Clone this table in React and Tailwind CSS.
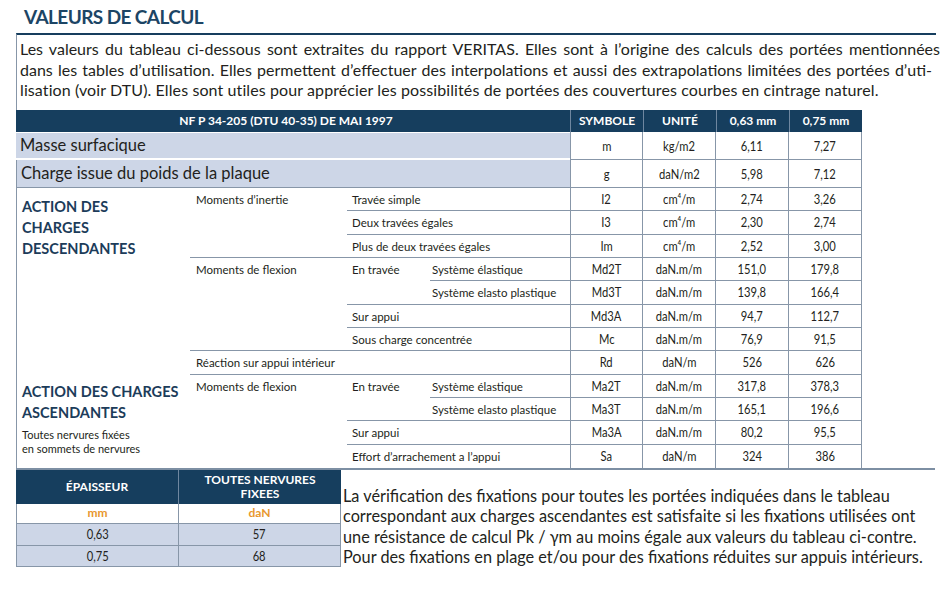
import React from "react";

const ROWS = [
  "row-start-2", "row-start-3", "row-start-4", "row-start-5", "row-start-6", "row-start-7", "row-start-8",
  "row-start-9", "row-start-10", "row-start-11", "row-start-12", "row-start-13", "row-start-14", "row-start-15",
];
const COLS = ["col-start-5", "col-start-6", "col-start-7", "col-start-8"];

const DATA = [
  ["m", "kg/m2", "6,11", "7,27"],
  ["g", "daN/m2", "5,98", "7,12"],
  ["I2", "cm⁴/m", "2,74", "3,26"],
  ["I3", "cm⁴/m", "2,30", "2,74"],
  ["Im", "cm⁴/m", "2,52", "3,00"],
  ["Md2T", "daN.m/m", "151,0", "179,8"],
  ["Md3T", "daN.m/m", "139,8", "166,4"],
  ["Md3A", "daN.m/m", "94,7", "112,7"],
  ["Mc", "daN.m/m", "76,9", "91,5"],
  ["Rd", "daN/m", "526", "626"],
  ["Ma2T", "daN.m/m", "317,8", "378,3"],
  ["Ma3T", "daN.m/m", "165,1", "196,6"],
  ["Ma3A", "daN.m/m", "80,2", "95,5"],
  ["Sa", "daN/m", "324", "386"],
];

function Val({ children }) {
  return <span className="inline-block scale-x-[0.8] text-[14px] leading-none text-[#231f20]">{children}</span>;
}

const B = "border-[#8796a8]";
const sub = "text-[11.5px] leading-[23px] text-[#231f20] whitespace-nowrap";

export default function App() {
  return (
    <div className="w-[948px] h-[594px] bg-white font-['Lato',sans-serif] text-[#231f20] overflow-hidden">
      {/* Title */}
      <div className="pl-6 pt-[4px] h-[33px] text-[19px] font-bold leading-[26px] text-[#1c4565] tracking-[-0.6px]">
        VALEURS DE CALCUL
      </div>

      {/* Intro */}
      <div className="ml-4 w-[920px] h-[77px] border-t-2 border-t-[#163e5e] border-l border-l-[#8796a8] pl-[3px] pt-[4px]">
        <div className="text-[16px] leading-[20.5px] text-[#231f20]">
          <div className="whitespace-nowrap text-justify [text-align-last:justify] w-[920px]">
            Les valeurs du tableau ci-dessous sont extraites du rapport VERITAS. Elles sont à l’origine des calculs des portées mentionnées
          </div>
          <div className="whitespace-nowrap text-justify [text-align-last:justify] w-[912px]">
            dans les tables d’utilisation. Elles permettent d’effectuer des interpolations et aussi des extrapolations limitées des portées d’uti-
          </div>
          <div className="whitespace-nowrap tracking-[0.1px]">
            lisation (voir DTU). Elles sont utiles pour apprécier les possibilités de portées des couvertures courbes en cintrage naturel.
          </div>
        </div>
      </div>

      {/* Main table */}
      <div className="ml-4 w-[846px] grid grid-cols-[174px_157px_83px_140px_73px_73px_73px_73px] grid-rows-[22px_28px_28px_repeat(12,23.33px)]">
        {/* header */}
        <div className="col-start-1 col-span-4 row-start-1 bg-[#163e5e] text-white font-bold text-[12px] flex items-center justify-center pr-[14px]">
          NF P 34-205 (DTU 40-35) DE MAI 1997
        </div>
        <div className="col-start-5 row-start-1 bg-[#163e5e] border-l border-[#6f87a0] text-white font-bold text-[12px] flex items-center justify-center">SYMBOLE</div>
        <div className="col-start-6 row-start-1 bg-[#163e5e] border-l border-[#6f87a0] text-white font-bold text-[12px] flex items-center justify-center">UNITÉ</div>
        <div className="col-start-7 row-start-1 bg-[#163e5e] border-l border-[#6f87a0] text-white font-bold text-[12px] flex items-center justify-center">0,63 mm</div>
        <div className="col-start-8 row-start-1 bg-[#163e5e] border-l border-[#6f87a0] text-white font-bold text-[12px] flex items-center justify-center">0,75 mm</div>

        {/* Masse / Charge */}
        <div className="col-start-1 col-span-4 row-start-2 bg-[#cdd6e7] border-t border-t-white border-b-2 border-b-white flex items-center pl-1 text-[16.5px]">
          Masse surfacique
        </div>
        <div className={`col-start-1 col-span-4 row-start-3 bg-[#cdd6e7] border-b border-l ${B} flex items-center pl-1 text-[16.5px]`}>
          Charge issue du poids de la plaque
        </div>

        {/* categories */}
        <div className={`col-start-1 row-start-4 row-span-8 border-l ${B} pl-[5px] pt-[8px]`}>
          <div className="text-[14.5px] font-bold leading-[21px] text-[#1c3c5a]">
            ACTION DES<br />CHARGES<br />DESCENDANTES
          </div>
        </div>
        <div className={`col-start-1 row-start-12 row-span-4 border-l ${B} pl-[5px] pt-[6px]`}>
          <div className="text-[14.5px] font-bold leading-[21px] text-[#1c3c5a] whitespace-nowrap">
            ACTION DES CHARGES<br />ASCENDANTES
          </div>
          <div className="mt-[5px] text-[11px] leading-[14px]">
            Toutes nervures fixées<br />en sommets de nervures
          </div>
        </div>

        {/* col 2 */}
        <div className={`col-start-2 row-start-4 row-span-3 border-b ${B} pl-[6px] ${sub}`}>Moments d’inertie</div>
        <div className={`col-start-2 row-start-7 row-span-4 border-b ${B} pl-[6px] ${sub}`}>Moments de flexion</div>
        <div className={`col-start-2 col-span-3 row-start-11 border-b ${B} pl-[6px] ${sub}`}>Réaction sur appui intérieur</div>
        <div className={`col-start-2 row-start-12 row-span-4 pl-[6px] ${sub}`}>Moments de flexion</div>

        {/* col 3-4 descending */}
        <div className={`col-start-3 col-span-2 row-start-4 border-b ${B} pl-[5px] ${sub}`}>Travée simple</div>
        <div className={`col-start-3 col-span-2 row-start-5 border-b ${B} pl-[5px] ${sub}`}>Deux travées égales</div>
        <div className={`col-start-3 col-span-2 row-start-6 border-b ${B} pl-[5px] ${sub}`}>Plus de deux travées égales</div>
        <div className={`col-start-3 row-start-7 row-span-2 border-b ${B} pl-[5px] ${sub}`}>En travée</div>
        <div className={`col-start-4 row-start-7 border-b ${B} pl-[2px] ${sub}`}>Système élastique</div>
        <div className={`col-start-4 row-start-8 border-b ${B} pl-[2px] ${sub}`}>Système elasto plastique</div>
        <div className={`col-start-3 col-span-2 row-start-9 border-b ${B} pl-[5px] ${sub}`}>Sur appui</div>
        <div className={`col-start-3 col-span-2 row-start-10 border-b ${B} pl-[5px] ${sub}`}>Sous charge concentrée</div>

        {/* col 3-4 ascending */}
        <div className={`col-start-3 row-start-12 row-span-2 border-b ${B} pl-[5px] ${sub}`}>En travée</div>
        <div className={`col-start-4 row-start-12 border-b ${B} pl-[2px] ${sub}`}>Système élastique</div>
        <div className={`col-start-4 row-start-13 border-b ${B} pl-[2px] ${sub}`}>Système elasto plastique</div>
        <div className={`col-start-3 col-span-2 row-start-14 border-b ${B} pl-[5px] ${sub}`}>Sur appui</div>
        <div className={`col-start-3 col-span-2 row-start-15 pl-[5px] ${sub}`}>Effort d’arrachement a l’appui</div>

        {/* right data cells */}
        {DATA.map((row, ri) =>
          row.map((v, ci) => (
            <div
              key={`${ri}-${ci}`}
              className={`${ROWS[ri]} ${COLS[ci]} flex items-center justify-center border-r ${B} ${
                ci === 0 ? "border-l" : ""
              } ${ri === DATA.length - 1 ? "" : "border-b"}`}
            >
              <Val>{v}</Val>
            </div>
          ))
        )}
      </div>
      <div className="ml-4 w-[919px] h-[2px] bg-[#7d8fa3]" />

      {/* Bottom section */}
      <div className="ml-4 flex">
        <div className="w-[325px] grid grid-cols-[162px_163px] grid-rows-[34px_20px_22px_21px]">
          <div className="bg-[#163e5e] text-white font-bold text-[12px] flex items-center justify-center">ÉPAISSEUR</div>
          <div className="bg-[#163e5e] border-l border-[#6f87a0] text-white font-bold text-[12px] leading-[14px] flex items-center justify-center text-center">
            TOUTES NERVURES<br />FIXEES
          </div>
          <div className={`border-l border-b ${B} flex items-center justify-center text-[12px] font-bold text-[#e8982f]`}>mm</div>
          <div className={`border-l border-r border-b ${B} flex items-center justify-center text-[12px] font-bold text-[#e8982f]`}>daN</div>
          <div className={`bg-[#cdd6e7] border-l border-b ${B} flex items-center justify-center`}><Val>0,63</Val></div>
          <div className={`bg-[#cdd6e7] border-l border-r border-b ${B} flex items-center justify-center`}><Val>57</Val></div>
          <div className={`bg-[#cdd6e7] border-l border-b ${B} flex items-center justify-center`}><Val>0,75</Val></div>
          <div className={`bg-[#cdd6e7] border-l border-r border-b ${B} flex items-center justify-center`}><Val>68</Val></div>
        </div>
        <div className="pl-[2px] pt-[16px] text-[16.3px] leading-[20.5px] text-[#231f20] whitespace-nowrap">
          La vérification des fixations pour toutes les portées indiquées dans le tableau<br />
          correspondant aux charges ascendantes est satisfaite si les fixations utilisées ont<br />
          une résistance de calcul Pk / γm au moins égale aux valeurs du tableau ci-contre.<br />
          Pour des fixations en plage et/ou pour des fixations réduites sur appuis intérieurs.
        </div>
      </div>
    </div>
  );
}
